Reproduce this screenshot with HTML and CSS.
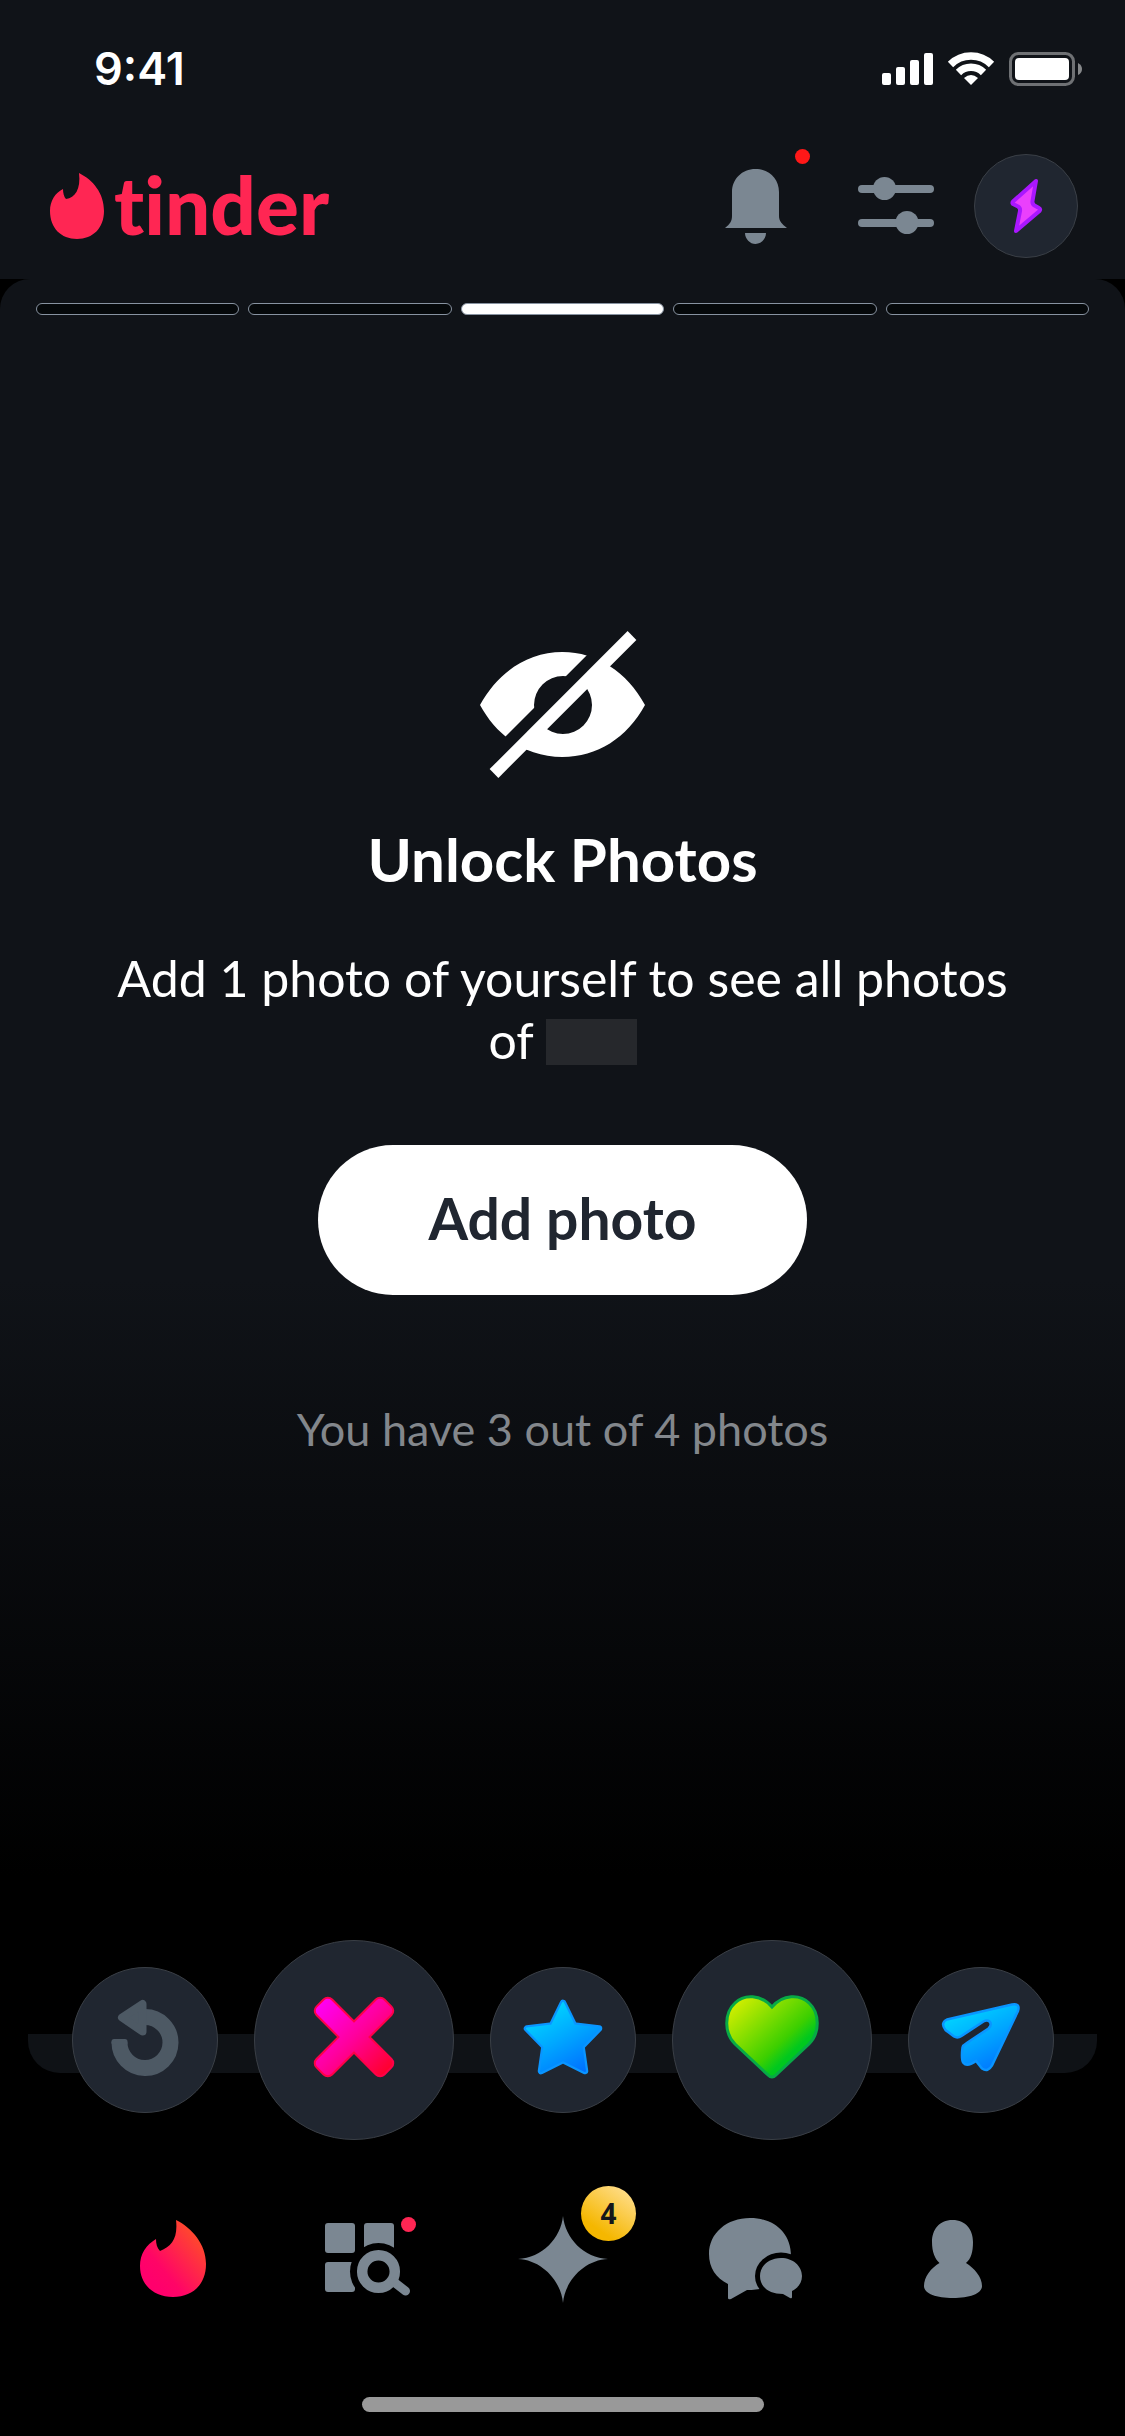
FILE: index.html
```html
<!DOCTYPE html>
<html lang="en">
<head>
	<meta charset="utf-8">
	<meta name="viewport" content="width=device-width, initial-scale=1">
	<title>Tinder</title>
	<link rel="stylesheet" href="styles.css">
</head>
<body>
	<div class="top">
		<div class="status">
			<span class="time">9:41</span>
			<svg class="status-icons" width="200" height="36" viewBox="882 51 200 36" aria-hidden="true">
				<g fill="#fff">
					<rect x="882" y="73" width="9" height="12" rx="2"/>
					<rect x="896" y="67" width="9" height="18" rx="2"/>
					<rect x="910" y="60" width="9" height="25" rx="2"/>
					<rect x="924" y="53" width="9" height="32" rx="2"/>
					<path d="M971 85L964 78Q971 72 978 78Z"/>
					<rect x="1015" y="58" width="54" height="22" rx="4"/>
				</g>
				<path d="M950.5 64.500A29 29 0 0 1 991.500 64.500M958.500 72.500A17.700 17.700 0 0 1 983.500 72.500" fill="none" stroke="#fff" stroke-width="7.500"/>
				<rect x="1010.500" y="53.500" width="63" height="31" rx="8" fill="none" stroke="#6f7174" stroke-width="3"/>
				<path d="M1078 63Q1082 65 1082 69T1078 75Z" fill="#86888a"/>
			</svg>
		</div>
		<header class="header">
			<a class="logo" href="#">
				<svg width="54" height="66" viewBox="0 0 54 66" aria-hidden="true"><path fill="#ff2653" d="M29 0C43 7 54 20 54 38C54 55 43 66 27 66S0 55 0 38C0 28 5 20 13 16C13 20 14 24 16 26C25 25 31 16 29 0Z"/></svg>
				<span>tinder</span>
			</a>
			<div class="tools">
				<button class="tool bell" aria-label="Notifications">
					<svg width="62" height="75" viewBox="725 169 62 75"><path d="M725 228C730 224 732 221 732 216V192C732 179 742 169 755.500 169S779 179 779 192V216C779 221 782 224 787 228ZM745 233H766C766 239 761 244 755.500 244S745 239 745 233Z"/></svg>
					<i class="dot"></i>
				</button>
				<button class="tool" aria-label="Filters">
					<svg width="76" height="58" viewBox="858 177 76 58"><rect x="858" y="185" width="76" height="8" rx="4"/><rect x="858" y="219" width="76" height="8" rx="4"/><circle cx="884.500" cy="188.500" r="11.500"/><circle cx="907" cy="222.500" r="11.500"/></svg>
				</button>
				<button class="tool boost" aria-label="Boost">
					<svg width="34" height="56" viewBox="1009 178 34 56"><path d="M1036 181L1013 201.500Q1011.500 203.500 1014 204.500L1018 206.500Q1020.500 208 1020 211L1016 231L1039.500 211Q1041 209 1039 208L1034.500 205.500Q1032 204 1032.500 201Z" fill="#ea40fc" stroke="#aa17ff" stroke-width="4" stroke-linejoin="round"/></svg>
				</button>
			</div>
		</header>
	</div>

	<main class="card">
		<div class="segments">
			<span></span><span></span><span class="on"></span><span></span><span></span>
		</div>
		<svg class="eye" width="165" height="148" viewBox="480 631 165 148" aria-hidden="true">
			<mask id="gap">
				<rect x="480" y="631" width="165" height="148" fill="#fff"/>
				<path d="M652 600L462 790" stroke="#000" stroke-width="14"/>
			</mask>
			<path mask="url(#gap)" fill="#fff" fill-rule="evenodd" d="M480 705C498 672 528 652 562.500 652S627 672 645 705C627 738 597 757 562.500 757S498 738 480 705ZM534 705a29 29 0 1 0 58 0a29 29 0 1 0 -58 0Z"/>
			<path d="M632 635.500L494 773.500" stroke="#fff" stroke-width="12.400"/>
		</svg>
		<h1>Unlock Photos</h1>
		<p class="lead">Add 1 photo of yourself to see all photos <span class="who">of <span class="name"></span></span></p>
		<button class="add">Add photo</button>
		<p class="count">You have 3 out of 4 photos</p>
	</main>
	<div class="next-card"></div>

	<div class="actions">
		<button class="action" aria-label="Rewind">
			<svg width="68" height="77" viewBox="111 1998 68 77" fill="none"><path d="M119.500 2041A25.500 25.500 0 1 0 145 2016" fill="none" stroke="#4d5964" stroke-width="16"/><rect x="111.500" y="2038" width="16" height="6" rx="2.500" fill="#4d5964"/><path d="M122 2016.500L142.500 2003V2030.500Z" fill="#4d5964" stroke="#4d5964" stroke-width="8" stroke-linejoin="round"/></svg>
		</button>
		<button class="action big" aria-label="Nope">
			<svg width="84" height="84" viewBox="-42 -42 84 84">
				<linearGradient id="pink" gradientUnits="userSpaceOnUse" x1="-46" x2="46" y1="0" y2="0"><stop offset="0" stop-color="#ff00f0"/><stop offset=".5" stop-color="#ff009c"/><stop offset="1" stop-color="#ff0030"/></linearGradient>
				<g transform="rotate(45)">
					<g fill="#ff0048"><rect x="-49" y="-12" width="98" height="24" rx="7"/><rect x="-12" y="-49" width="24" height="98" rx="7"/></g>
					<g fill="url(#pink)"><rect x="-47" y="-10" width="94" height="20" rx="5"/><rect x="-10" y="-47" width="20" height="94" rx="5"/></g>
				</g>
			</svg>
		</button>
		<button class="action" aria-label="Super Like">
			<svg width="80" height="76" viewBox="523 1999 80 76">
				<linearGradient id="blue" x1=".2" y1="0" x2=".8" y2="1"><stop offset="0" stop-color="#00dcff"/><stop offset=".5" stop-color="#00a8ff"/><stop offset="1" stop-color="#0070ff"/></linearGradient>
				<path d="M563 2003L574 2025.500L599 2028.500L581.500 2046.500L585 2071L563 2060L541 2071L544.500 2046.500L527 2028.500L552 2025.500Z" fill="url(#blue)" stroke="#0a95ff" stroke-width="6.500" stroke-linejoin="round"/>
				<path d="M563 2003L574 2025.500L599 2028.500L581.500 2046.500L585 2071L563 2060L541 2071L544.500 2046.500L527 2028.500L552 2025.500Z" fill="url(#blue)" stroke="url(#blue)" stroke-width="2" stroke-linejoin="round"/>
			</svg>
		</button>
		<button class="action big" aria-label="Like">
			<svg width="94" height="84" viewBox="724 1996 94 84">
				<linearGradient id="green" x1="0" y1=".1" x2=".85" y2=".9"><stop offset="0" stop-color="#dcf000"/><stop offset=".65" stop-color="#3ccf00"/><stop offset=".8" stop-color="#00c81e"/></linearGradient>
				<path d="M771 2008C760 1995 743 1995 734 2004C723 2014 723 2034 734 2045L767 2076Q771 2080 775 2076L808 2045C819 2034 819 2014 808 2004C799 1995 782 1995 771 2008Z" fill="url(#green)" stroke="#08aa46" stroke-width="3"/>
			</svg>
		</button>
		<button class="action" aria-label="Send message">
			<svg width="80" height="70" viewBox="940 2002 80 70"><path d="M946 2019.500L1011 2004.500Q1019.500 2003 1017 2011L991 2065.500Q987 2072.500 981 2068.500L975 2061Q966 2067.500 962.500 2063Q960 2060 961.500 2047.500Q962 2045 965 2043.500L987.500 2028.500Q991.500 2024.500 988.500 2021.500Q986 2019.500 982.500 2021.500L960.500 2036Q956.500 2038.500 953 2036.500L944.500 2030Q939 2023 946 2019.500Z" fill="url(#blue)" stroke="#0a95ff" stroke-width="2.500"/></svg>
		</button>
	</div>

	<nav class="nav">
		<a href="#" aria-label="Discover">
			<svg width="66" height="78" viewBox="0 0 66 78">
				<linearGradient id="fire" x1=".2" y1=".8" x2=".8" y2=".2"><stop offset="0" stop-color="#ff006c"/><stop offset=".25" stop-color="#ff0566"/><stop offset="1" stop-color="#ff4430"/></linearGradient>
				<path fill="url(#fire)" d="M36 0C52 8 66 24 66 44C66 64 53 77 33 77S0 64 0 46C0 34 6 25 16 19C16 24 17 28 20 31C32 26 38 18 36 0Z"/>
			</svg>
		</a>
		<a href="#" aria-label="Explore">
			<svg width="92" height="78" viewBox="322 2220 92 78">
				<mask id="lens"><rect x="322" y="2220" width="92" height="78" fill="#fff"/><circle cx="378.500" cy="2271.500" r="28.500" fill="#000"/></mask>
				<g mask="url(#lens)"><rect x="325" y="2223" width="30" height="30" rx="3"/><rect x="364" y="2223" width="30" height="30" rx="3"/><rect x="325" y="2262" width="30" height="30" rx="3"/></g>
				<circle cx="378.500" cy="2271.500" r="16.300" fill="none" stroke="#7b8792" stroke-width="10.500"/>
				<path d="M394 2282L405.500 2291" stroke="#7b8792" stroke-width="9" stroke-linecap="round"/>
			</svg>
			<i class="dot"></i>
		</a>
		<a href="#" aria-label="Likes">
			<svg width="90" height="88" viewBox="518 2215 90 88"><path d="M563 2216C565 2238 584 2258 608 2259C584 2260 565 2281 563 2303C561 2281 542 2260 518 2259C542 2258 561 2238 563 2216Z"/></svg>
			<b class="badge">4</b>
		</a>
		<a href="#" aria-label="Messages">
			<svg width="100" height="82" viewBox="708 2219 100 82">
				<mask id="bubble"><rect x="708" y="2219" width="96" height="82" fill="#fff"/><ellipse cx="781" cy="2277" rx="26" ry="23.500" fill="#000"/></mask>
				<path mask="url(#bubble)" d="M750 2219C774 2219 791 2234 791 2257C791 2279 772 2291 747 2291L731 2300Q728 2301 728 2299V2285C716 2279 709 2269 709 2255C709 2234 727 2219 750 2219Z"/>
				<path d="M781 2259C793 2259 802 2267 802 2277C802 2284 798 2289 792 2292V2298Q792 2300 790 2299L783 2295C769 2295 760 2288 760 2277C760 2267 769 2259 781 2259Z"/>
			</svg>
		</a>
		<a href="#" aria-label="Profile">
			<svg width="60" height="78" viewBox="923 2220 60 78"><path d="M952.500 2220C966 2220 973 2230 973 2242C973 2252 971 2259 966 2263C974 2268 982 2277 982 2286C982 2294 969 2298 953 2298S924 2294 924 2286C924 2277 931 2268 939.500 2263C935 2259 932 2252 932 2242C932 2230 939 2220 952.500 2220Z"/></svg>
		</a>
	</nav>
	<div class="home-bar"></div>
</body>
</html>
```

FILE: styles.css
```css
* { box-sizing: border-box; }
body {
	margin: 0;
	min-height: 100vh;
	display: flex;
	flex-direction: column;
	background: #000;
	color: #fff;
	font-family: Lato, "Liberation Sans", sans-serif;
}
button {
	border: none;
	padding: 0;
	background: none;
	color: inherit;
	font-family: inherit;
}
svg { display: block; flex: none; fill: #7b8792; }
h1, p { margin: 0; }

.top { background: #101318; }
.status {
	height: 133px;
	padding: 4px 43px 0 94px;
	display: flex;
	align-items: center;
	justify-content: space-between;
}
.time {
	font-family: Inter, sans-serif;
	font-size: 45px;
	font-weight: 600;
}
.header {
	height: 146px;
	padding: 0 47px 0 50px;
	display: flex;
	align-items: center;
	justify-content: space-between;
}
.logo {
	display: flex;
	align-items: center;
	gap: 10px;
	color: #ff2653;
	font-size: 80px;
	line-height: 80px;
	font-weight: 900;
	font-variant-ligatures: none;
	text-decoration: none;
}
.logo span { padding-bottom: 4px; }
.tools { display: flex; gap: 26px; }
.tool {
	position: relative;
	width: 104px;
	height: 104px;
	display: flex;
	align-items: center;
	justify-content: center;
}
.bell { margin-right: 10px; }
.boost, .action {
	border: 1px solid #3a3f46;
	border-radius: 50%;
	background: #202630;
}
.dot {
	position: absolute;
	width: 15px;
	height: 15px;
	border-radius: 50%;
	background: #ff2653;
}
.bell .dot { top: -5px; right: -2px; background: #ff1818; }

.card {
	flex: 1;
	padding: 24px 36px;
	display: flex;
	flex-direction: column;
	align-items: center;
	border-radius: 30px;
	background: linear-gradient(#101318 57%, #000 91%);
	text-align: center;
}
.segments {
	width: 100%;
	display: flex;
	gap: 9px;
}
.segments span {
	flex: 1;
	height: 12px;
	border: 1px solid #8792a0;
	border-radius: 6px;
	background: #05080a;
}
.segments .on { background: #fff; }
.eye { margin-top: 316px; }
h1 {
	margin-top: 44px;
	font-size: 60px;
	line-height: 72px;
	font-weight: 700;
}
.lead {
	max-width: 924px;
	margin-top: 52px;
	font-size: 50px;
	line-height: 62px;
}
.who { white-space: nowrap; }
.name {
	display: inline-block;
	width: 91px;
	height: 46px;
	background: #26282c;
	vertical-align: -6px;
}
.add {
	width: 489px;
	height: 150px;
	padding-bottom: 4px;
	margin-top: 74px;
	border-radius: 75px;
	background: #fff;
	color: #202630;
	font-size: 57px;
	font-weight: 700;
}
.count {
	margin-top: 104px;
	color: #83878c;
	font-size: 45px;
	line-height: 60px;
}
.next-card {
	height: 39px;
	margin: 0 28px;
	border-radius: 0 0 32px 32px;
	background: #0f1216;
}

.actions {
	margin-top: -133px;
	display: flex;
	align-items: center;
	justify-content: center;
	gap: 36px;
}
.action {
	width: 146px;
	height: 146px;
	padding-bottom: 6px;
	display: flex;
	align-items: center;
	justify-content: center;
}
.big { width: 200px; height: 200px; }

.nav {
	height: 238px;
	padding: 0 75px;
	display: grid;
	grid-template-columns: repeat(5, 1fr);
}
.nav a {
	position: relative;
	display: flex;
	align-items: center;
	justify-content: center;
}
.nav .dot { top: 77px; right: 49px; }
.badge {
	position: absolute;
	top: 46px;
	right: 24px;
	width: 55px;
	border-radius: 50%;
	background: linear-gradient(35deg, #f5b700 25%, #ffdd8a 90%);
	color: #14161a;
	font: 700 28px/55px "Open Sans", sans-serif;
	text-align: center;
}
.home-bar {
	width: 402px;
	height: 15px;
	margin: 19px auto 24px;
	border-radius: 8px;
	background: #999;
}
```
